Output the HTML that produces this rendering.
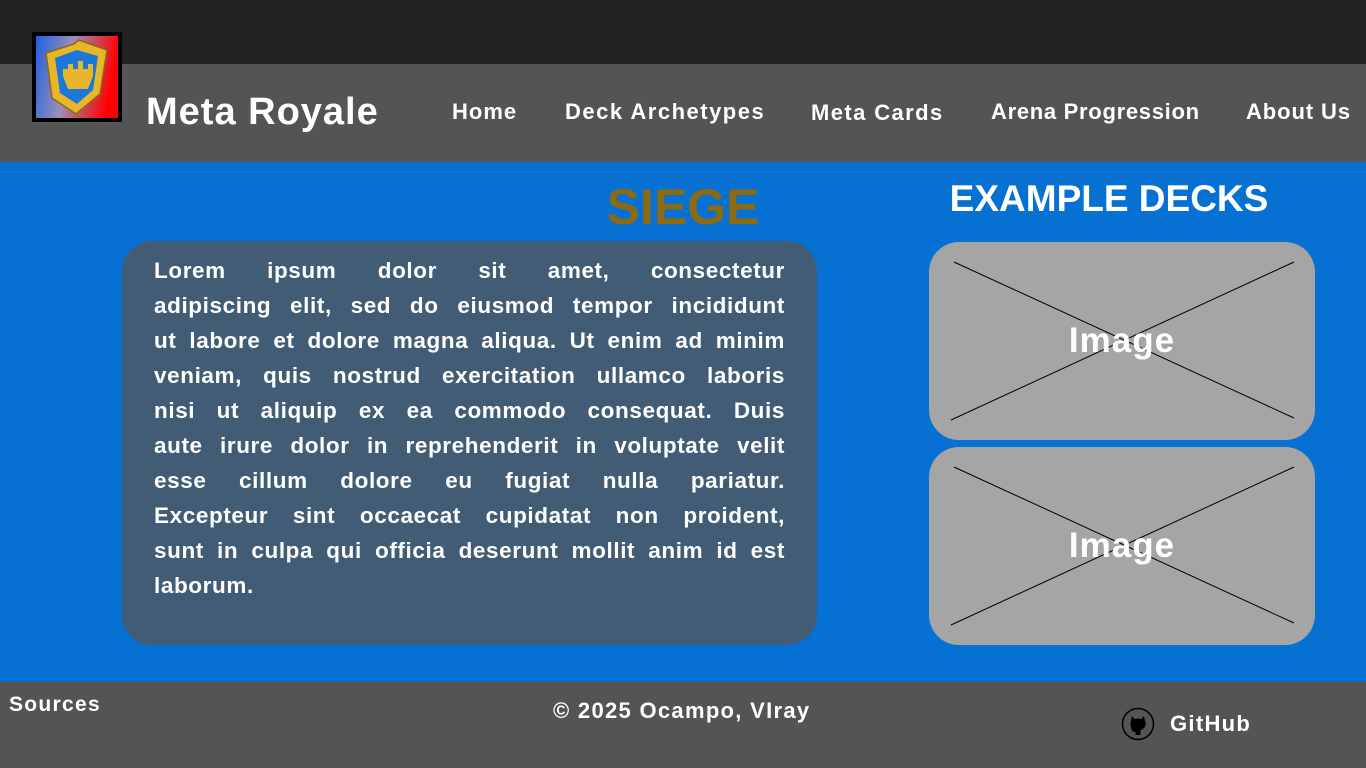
<!DOCTYPE html>
<html><head><style>
*{margin:0;padding:0;box-sizing:border-box}
body{width:1366px;height:768px;overflow:hidden;font-family:"Liberation Sans",sans-serif;font-weight:bold;color:#fff;position:relative;background:#0670d3}
.a{position:absolute;white-space:nowrap}
.n{font-size:22px;line-height:28px;letter-spacing:1px}
.l{text-align:justify;text-align-last:justify;white-space:nowrap;height:35px}
</style></head><body>
<div class="a" style="left:0;top:0;width:1366px;height:64px;background:#222224"></div>
<div class="a" style="left:0;top:64px;width:1366px;height:98px;background:#545454"></div>
<div class="a" style="left:32px;top:32px;width:90px;height:90px;background:#000;padding:4px">
<svg width="82" height="82" viewBox="0 0 82 82"><defs><linearGradient id="g" x1="0" x2="1" y1="0" y2="0.2"><stop offset="0" stop-color="#1f5fe0"/><stop offset=".45" stop-color="#9a8fb8"/><stop offset="1" stop-color="#ff0000"/></linearGradient></defs>
<rect width="82" height="82" fill="url(#g)"/>
<path d="M10 17 L38 8 L43 4 L71 14 L64 58 L40 78 L16 62 Z" fill="#e8b62a" stroke="#8a6a10" stroke-width="1.5"/>
<path d="M19 22 L41 14 L62 20 L57 54 L41 68 L24 57 Z" fill="#1a78d8"/>
<path d="M27 33 h5v-5h5v5h5v-8h5v8h5v-5h5v12l-5 13h-20l-5-13z" fill="#e8b62a"/>
</svg></div>
<div class="a" style="left:146px;top:88px;font-size:38px;line-height:48px;letter-spacing:1px">Meta Royale</div>
<div class="a n" style="left:452px;top:98px">Home</div>
<div class="a n" style="left:565px;top:98px;letter-spacing:1.5px">Deck Archetypes</div>
<div class="a n" style="left:811px;top:99px;letter-spacing:1.4px">Meta Cards</div>
<div class="a n" style="left:991px;top:98px;letter-spacing:0.7px">Arena Progression</div>
<div class="a n" style="left:1246px;top:98px;letter-spacing:0.9px">About Us</div>
<div class="a" style="left:583px;top:176px;width:200px;text-align:center;font-size:50px;line-height:62px;color:#8b6a14">SIEGE</div>
<div class="a" style="left:929px;top:176px;width:360px;text-align:center;font-size:37px;line-height:46px">EXAMPLE DECKS</div>
<div class="a" style="left:122px;top:241px;width:695px;height:404px;background:#435c75;border-radius:30px;padding:12px 32px;white-space:normal;font-size:22.5px;line-height:35px;letter-spacing:0.6px">
<div class="l">Lorem ipsum dolor sit amet, consectetur</div>
<div class="l">adipiscing elit, sed do eiusmod tempor incididunt</div>
<div class="l">ut labore et dolore magna aliqua. Ut enim ad minim</div>
<div class="l">veniam, quis nostrud exercitation ullamco laboris</div>
<div class="l">nisi ut aliquip ex ea commodo consequat. Duis</div>
<div class="l">aute irure dolor in reprehenderit in voluptate velit</div>
<div class="l">esse cillum dolore eu fugiat nulla pariatur.</div>
<div class="l">Excepteur sint occaecat cupidatat non proident,</div>
<div class="l">sunt in culpa qui officia deserunt mollit anim id est</div>
<div style="height:35px">laborum.</div>
</div>
<div class="a" style="left:929px;top:242px;width:386px;height:198px;background:#a5a5a5;border-radius:30px;overflow:hidden">
<svg class="a" style="left:0;top:0" width="386" height="198"><line x1="25" y1="20" x2="365" y2="176" stroke="#000"/><line x1="365" y1="20" x2="22" y2="178" stroke="#000"/></svg>
<div class="a" style="left:0;top:78px;width:386px;text-align:center;font-size:35px;line-height:42px;letter-spacing:1px">Image</div></div>
<div class="a" style="left:929px;top:447px;width:386px;height:198px;background:#a5a5a5;border-radius:30px;overflow:hidden">
<svg class="a" style="left:0;top:0" width="386" height="198"><line x1="25" y1="20" x2="365" y2="176" stroke="#000"/><line x1="365" y1="20" x2="22" y2="178" stroke="#000"/></svg>
<div class="a" style="left:0;top:78px;width:386px;text-align:center;font-size:35px;line-height:42px;letter-spacing:1px">Image</div></div>
<div class="a" style="left:0;top:682px;width:1366px;height:86px;background:#545454"></div>
<div class="a" style="left:9px;top:692px;font-size:21px;line-height:26px;letter-spacing:1.3px">Sources</div>
<div class="a" style="left:553px;top:697px;font-size:22px;line-height:27px;letter-spacing:1.3px">© 2025 Ocampo, VIray</div>
<svg class="a" style="left:1121px;top:707px" width="34" height="34" viewBox="0 0 34 34"><circle cx="17" cy="17" r="15.5" fill="none" stroke="#000" stroke-width="1.5"/><path d="M11 9 L13.5 12 Q17 11 20.5 12 L23 9 L24 14 Q26 18 23 21 Q21 23 19.5 23 L19.5 28 L14.5 28 L14.5 25 Q11 25 10.5 22 Q9 19 10 14 Z" fill="#000"/></svg>
<div class="a" style="left:1170px;top:710px;font-size:22px;line-height:28px;letter-spacing:1.3px">GitHub</div>
</body></html>
